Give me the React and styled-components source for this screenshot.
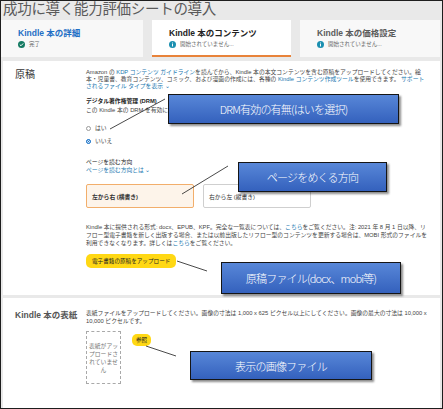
import styled, { createGlobalStyle, css } from "styled-components";

const GlobalStyle = createGlobalStyle`
  html, body {
    margin: 0;
    padding: 0;
    background: #ffffff;
  }
  body {
    font-family: "Liberation Sans", "Noto Sans CJK JP", sans-serif;
    color: #222;
  }
`;

const Frame = styled.div`
  position: relative;
  width: 443px;
  height: 409px;
  box-sizing: border-box;
  border: 1px solid #1e1e1e;
  background: #e9e9e9;
  overflow: hidden;
`;

const Title = styled.h1`
  margin: 0;
  height: 19px;
  padding-left: 2px;
  font-size: 14.5px;
  line-height: 17px;
  font-weight: 400;
  color: #5a5a5a;
  white-space: nowrap;
  letter-spacing: -0.3px;
`;

const Tabs = styled.div`
  display: grid;
  grid-template-columns: 142px 139px 140px;
  gap: 9px;
  height: 37px;
`;

const Tab = styled.div`
  box-sizing: border-box;
  padding: 8px 0 0 17px;
  background: ${({ active }) => (active ? "#ffffff" : "#f8f8f8")};
  border-bottom: 2px solid ${({ active }) => (active ? "#e8833a" : "transparent")};
`;

const TabTitle = styled.div`
  font-size: 8.5px;
  line-height: 11px;
  font-weight: 700;
  color: ${({ tone }) =>
    tone === "link" ? "#1f6fc5" : tone === "muted" ? "#5b5b5b" : "#222"};
  white-space: nowrap;
`;

const Status = styled.div`
  display: flex;
  align-items: center;
  gap: 4px;
  margin-top: 1px;
  font-size: 5.5px;
  line-height: 9px;
  color: #666;
`;

const Panel = styled.section`
  display: grid;
  grid-template-columns: 83px 1fr;
  margin: ${({ first }) => (first ? "4px 2px 0" : "3px 2px 0")};
  height: ${({ h }) => h}px;
  box-sizing: border-box;
  padding: ${({ first }) => (first ? "8px 12px 0 0" : "11px 12px 0 0")};
  background: #ffffff;
`;

const Label = styled.div`
  padding-left: 12px;
  font-size: ${({ small }) => (small ? "8.5px" : "10px")};
  line-height: 12px;
  font-weight: ${({ small }) => (small ? 700 : 400)};
  color: ${({ small }) => (small ? "#555" : "#333")};
  white-space: nowrap;
`;

const Content = styled.div`
  display: flex;
  flex-direction: column;
  align-items: flex-start;
`;

const Text = styled.p`
  margin: ${({ mt }) => mt || 0}px 0 0;
  font-size: 5.8px;
  line-height: ${({ lh }) => lh || 7}px;
  color: ${({ dark }) => (dark ? "#222" : "#444")};
  font-weight: ${({ bold }) => (bold ? 700 : 400)};
`;

const Link = styled.span`
  color: #1a78b0;
`;

const RadioRow = styled.label`
  display: flex;
  align-items: center;
  gap: 4px;
  margin-top: ${({ mt }) => mt}px;
  font-size: 5.8px;
  line-height: 8px;
  color: #444;
`;

const Radio = styled.span`
  width: 5px;
  height: 5px;
  border-radius: 50%;
  box-sizing: border-box;
  ${({ checked }) =>
    checked
      ? css`
          background: #1a73c8;
          border: 1.5px solid #1a73c8;
          box-shadow: inset 0 0 0 0.8px #fff;
        `
      : css`
          background: #fff;
          border: 1px solid #9a9a9a;
        `}
`;

const Choices = styled.div`
  display: flex;
  gap: 9px;
  margin-top: 10px;
`;

const Choice = styled.div`
  display: flex;
  align-items: center;
  width: 108px;
  height: 24px;
  box-sizing: border-box;
  padding-left: 5px;
  border-radius: 2px;
  font-size: 5.8px;
  color: #333;
  font-weight: ${({ selected }) => (selected ? 700 : 400)};
  background: ${({ selected }) => (selected ? "#fdf4ea" : "#fff")};
  border: 1px solid ${({ selected }) => (selected ? "#f2ae6b" : "#cfcfcf")};
`;

const YellowButton = styled.button`
  margin-top: ${({ mt }) => mt}px;
  height: ${({ h }) => h}px;
  padding: 0 ${({ px }) => px}px;
  border: 0;
  border-radius: 5px;
  background: #ffd814;
  font-family: inherit;
  font-size: 5.6px;
  color: #222;
  white-space: nowrap;
`;

const CoverRow = styled.div`
  display: flex;
  align-items: flex-start;
  gap: 11px;
  margin-top: 6px;
`;

const CoverBox = styled.div`
  display: flex;
  align-items: center;
  justify-content: center;
  width: 35px;
  height: 53px;
  box-sizing: border-box;
  padding: 0 2px;
  border: 1px dashed #a9a9a9;
  font-size: 5.8px;
  line-height: 8px;
  color: #777;
  text-align: center;
`;

const Callout = styled.div`
  position: absolute;
  left: ${({ x }) => x}px;
  top: ${({ y }) => y}px;
  width: ${({ w }) => w}px;
  height: ${({ h }) => h}px;
  box-sizing: border-box;
  display: flex;
  align-items: center;
  justify-content: center;
  border: 1.5px solid #151515;
  background: linear-gradient(#5887d8, #3461bd);
  box-shadow: 2px 2px 2px rgba(0, 0, 0, 0.45);
  color: #fff;
  font-family: "Noto Sans CJK JP", sans-serif;
  font-size: 11px;
  font-weight: 300;
  letter-spacing: -0.8px;
  white-space: nowrap;
`;

const Leaders = styled.svg`
  position: absolute;
  left: 0;
  top: 0;
  pointer-events: none;
`;

const CheckIcon = () => (
  <svg width="7" height="7" viewBox="0 0 10 10">
    <circle cx="5" cy="5" r="5" fill="#147a62" />
    <path d="M2.6 5.2 L4.3 6.8 L7.4 3.5" stroke="#fff" strokeWidth="1.4" fill="none" />
  </svg>
);

const InfoIcon = () => (
  <svg width="7" height="7" viewBox="0 0 10 10">
    <circle cx="5" cy="5" r="5" fill="#1b8fb0" />
    <rect x="4.3" y="4.2" width="1.4" height="3.6" fill="#fff" />
    <rect x="4.3" y="2.2" width="1.4" height="1.3" fill="#fff" />
  </svg>
);

export default function App() {
  return (
    <>
      <GlobalStyle />
      <Frame>
        <Title>成功に導く能力評価シートの導入</Title>
        <Tabs>
          <Tab>
            <TabTitle tone="link">Kindle 本の詳細</TabTitle>
            <Status>
              <CheckIcon />
              完了
            </Status>
          </Tab>
          <Tab active>
            <TabTitle>Kindle 本のコンテンツ</TabTitle>
            <Status>
              <InfoIcon />
              開始されていません...
            </Status>
          </Tab>
          <Tab>
            <TabTitle tone="muted">Kindle 本の価格設定</TabTitle>
            <Status>
              <InfoIcon />
              開始されていません...
            </Status>
          </Tab>
        </Tabs>

        <Panel first h={234}>
          <Label>原稿</Label>
          <Content>
            <Text lh={7}>
              Amazon の <Link>KDP コンテンツ ガイドライン</Link>を読んでから、Kindle
              本の本文コンテンツを含む原稿をアップロードしてください。絵本・児童書、教育コンテンツ、コミック、および漫画の作成には、各種の{" "}
              <Link>Kindle コンテンツ作成ツール</Link>を使用できます。{" "}
              <Link>サポートされるファイル タイプを表示 ⌄</Link>
            </Text>
            <Text bold dark mt={7} lh={8}>
              デジタル著作権管理 (DRM)
            </Text>
            <Text lh={8} mt={1}>
              この Kindle 本の DRM を有効にしますか?
            </Text>
            <RadioRow mt={10}>
              <Radio />
              はい
            </RadioRow>
            <RadioRow mt={5}>
              <Radio checked />
              いいえ
            </RadioRow>
            <Text dark mt={14} lh={7.5}>
              ページを読む方向
            </Text>
            <Text lh={7.5}>
              <Link>ページを読む方向とは ⌄</Link>
            </Text>
            <Choices>
              <Choice selected>左から右 (横書き)</Choice>
              <Choice>右から左 (縦書き)</Choice>
            </Choices>
            <Text mt={15} lh={8}>
              Kindle 本に提供される形式: docx、EPUB、KPF。完全な一覧表については、
              <Link>こちら</Link>をご覧ください。注: 2021 年 8 月 1
              日以降、リフロー型電子書籍を新しく出版する場合、または以前出版したリフロー型のコンテンツを更新する場合は、MOBI
              形式のファイルを利用できなくなります。詳しくは<Link>こちら</Link>をご覧ください。
            </Text>
            <YellowButton mt={7} h={14} px={6}>
              電子書籍の原稿をアップロード
            </YellowButton>
          </Content>
        </Panel>

        <Panel h={110}>
          <Label small>Kindle 本の表紙</Label>
          <Content>
            <Text lh={8}>
              表紙ファイルをアップロードしてください。画像の寸法は 1,000 x 625
              ピクセル以上にしてください。画像の最大の寸法は 10,000 x 10,000 ピクセルです。
            </Text>
            <CoverRow>
              <CoverBox>表紙がアップロードされていません</CoverBox>
              <YellowButton mt={3} h={12} px={4}>
                参照
              </YellowButton>
            </CoverRow>
          </Content>
        </Panel>

        <Leaders width="443" height="409">
          <line x1="164" y1="98" x2="109" y2="128" stroke="#1c1c1c" strokeWidth="0.8" />
          <line x1="227" y1="165" x2="181" y2="193" stroke="#1c1c1c" strokeWidth="0.8" />
          <line x1="176" y1="260" x2="206" y2="270" stroke="#1c1c1c" strokeWidth="0.8" />
          <line x1="145" y1="345" x2="175" y2="355" stroke="#1c1c1c" strokeWidth="0.8" />
        </Leaders>

        <Callout x={167} y={93} w={231} h={30}>
          DRM有効の有無(はいを選択)
        </Callout>
        <Callout x={237} y={161} w={149} h={30}>
          ページをめくる方向
        </Callout>
        <Callout x={220} y={261} w={180} h={32}>
          原稿ファイル(docx、mobi等)
        </Callout>
        <Callout x={189} y={350} w={182} h={29}>
          表示の画像ファイル
        </Callout>
      </Frame>
    </>
  );
}
